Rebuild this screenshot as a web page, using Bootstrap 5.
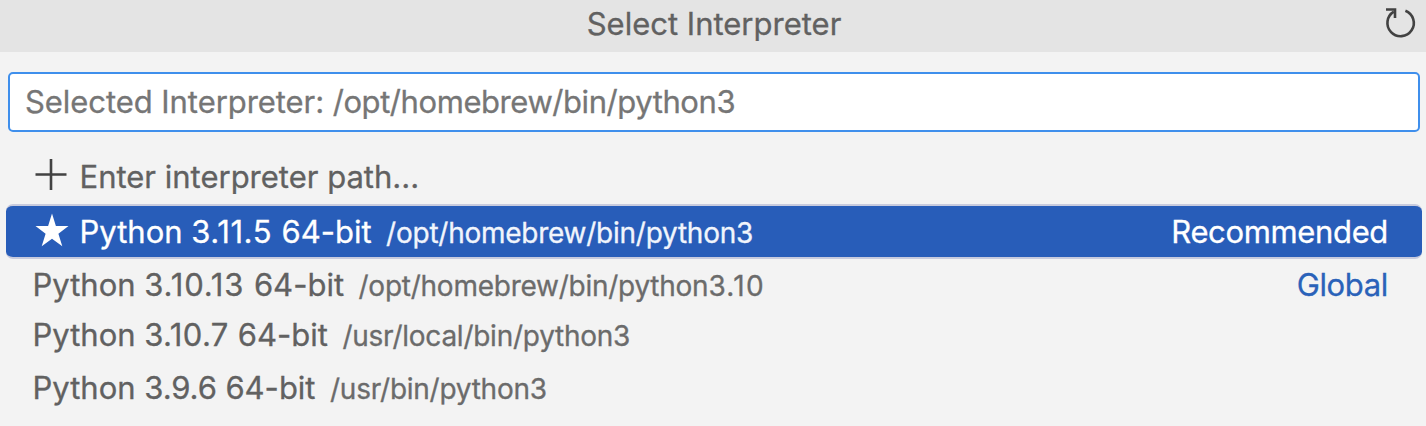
<!DOCTYPE html>
<html lang="en">
<head>
<meta charset="utf-8">
<meta name="viewport" content="width=device-width, initial-scale=1">
<title>Select Interpreter</title>
<link href="https://cdn.jsdelivr.net/npm/bootstrap@5.3.0/dist/css/bootstrap.min.css" rel="stylesheet">
<style>
  body { background: #f3f3f3; color: #616161; font-family: Inter, "Liberation Sans", sans-serif; font-size: 31px; line-height: 40px; height: 426px; overflow: hidden; -webkit-text-stroke: .3px; }
  .titlebar { height: 52px; background: #e4e4e4; padding: 0 12px 4px 14px; }
  .titlebar h1 { font-size: 31px; font-weight: 400; line-height: 40px; }
  .refresh { top: 5px; right: 9px; }
  .path-area { padding: 20px 6px 18px 8px; }
  .path-input { height: 60px; border: 2px solid #3f8fec; border-radius: 5px; padding: 8px 15px; font-size: 31px; line-height: 40px; background: #fff; color: #767676; white-space: nowrap; letter-spacing: -.06px; }
  .path-value { letter-spacing: -.43px; }
  .picks { margin: 0 4px 0 6px; }
  .picks .pick { padding: 1px 34px 0 26.5px; white-space: nowrap; background: transparent; color: inherit; border: 0; }
  .picks .pick-enter { height: 54px; padding-top: 0; }
  .picks .pick.pick.active { height: 55px; margin: 0; padding-top: 0; background: #285db9; color: #fff; border-radius: 7px; border: solid #c8cbde; border-width: 2px 0; }
  .picks .pick-13 { height: 51px; padding-top: 0; }
  .picks .pick-7 { height: 50px; padding-top: 0; }
  .picks .pick-6 { height: 54px; }
  .pick-icon { width: 34px; height: 34px; margin-right: 13px; flex: none; overflow: visible; }
  .v-11 { letter-spacing: .6px; }
  .v-13 { letter-spacing: .85px; }
  .v-7 { letter-spacing: .38px; }
  .v-6 { letter-spacing: -.1px; }
  .detail { font-size: 28px; line-height: 28px; color: #6b6b6b; margin-left: 14.5px; letter-spacing: -.25px; }
  .detail-version { letter-spacing: 1.3px; }
  .active .detail { color: #f1f5fc; }
  .pick-tag { letter-spacing: -.35px; }
  .tag-global { color: #2a62b9; }
</style>
</head>
<body>
<header class="titlebar position-relative d-flex align-items-center justify-content-center">
  <h1 class="m-0">Select Interpreter</h1>
  <svg class="refresh position-absolute" width="36" height="36" viewBox="0 0 36 36" fill="none" stroke="#424242" stroke-width="2.6"><path d="M5 4.5H14V13"/><path d="M12.8 6.7A13.2 13.2 0 1 0 24.4 5.7"/></svg>
</header>
<main>
  <div class="path-area"><div class="form-control path-input" role="textbox">Selected Interpreter: <span class="path-value">/opt/homebrew/bin/python3</span></div></div>
  <div class="list-group picks">
    <div class="pick pick-enter list-group-item d-flex align-items-center"><svg class="pick-icon" viewBox="0 0 34 34" stroke="#424242" stroke-width="2.6"><path d="M2.5 14.5H33.5M18 -1V30"/></svg><span>Enter interpreter path...</span></div>
    <div class="pick active list-group-item d-flex align-items-center"><svg class="pick-icon" viewBox="0 0 34 34" fill="#fff"><path d="M19 -1.5L22.9 10.9H35.5L25.4 18.8L29.3 31.3L19 23.7L8.7 31.3L12.6 18.8L2.5 10.9H15.1Z"/></svg><div class="d-flex align-items-baseline"><span>Python <span class="v-11">3.11.5 </span>64-bit</span><span class="detail">/opt/homebrew/bin/python3</span></div><span class="pick-tag ms-auto">Recommended</span></div>
    <div class="pick pick-13 list-group-item d-flex align-items-center"><div class="d-flex align-items-baseline"><span>Python <span class="v-13">3.10.13 </span>64-bit</span><span class="detail">/opt/homebrew/bin/python<span class="detail-version">3.10</span></span></div><span class="pick-tag ms-auto tag-global">Global</span></div>
    <div class="pick pick-7 list-group-item d-flex align-items-center"><div class="d-flex align-items-baseline"><span>Python <span class="v-7">3.10.7 </span>64-bit</span><span class="detail">/usr/local/bin/python3</span></div></div>
    <div class="pick pick-6 list-group-item d-flex align-items-center"><div class="d-flex align-items-baseline"><span>Python <span class="v-6">3.9.6 </span>64-bit</span><span class="detail">/usr/bin/python3</span></div></div>
  </div>
</main>
<script src="https://cdn.jsdelivr.net/npm/bootstrap@5.3.0/dist/js/bootstrap.bundle.min.js"></script>
</body>
</html>
